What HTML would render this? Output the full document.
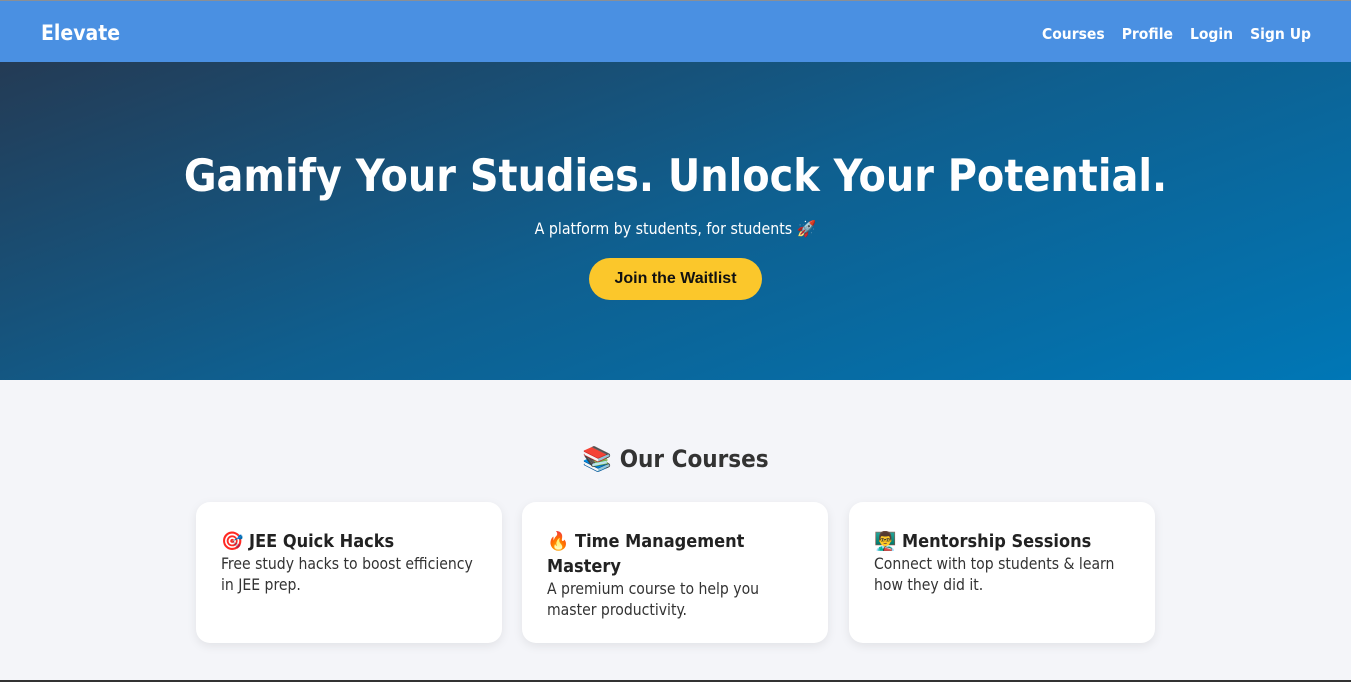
<!DOCTYPE html>
<html><head><meta charset="utf-8"><style>
*{margin:0;padding:0;box-sizing:border-box}
body{width:1351px;height:682px;overflow:hidden;background:#f4f5f9;font-family:"DejaVu Sans Condensed","Liberation Sans","Noto Sans CJK JP",sans-serif;color:#333;position:relative}
.top{position:absolute;top:0;left:0;width:1351px;height:1px;background:#8a8f96}
header{position:absolute;top:1px;left:0;width:1351px;height:61px;background:#4a90e2;color:#fff}
.logo{position:absolute;left:41px;top:20px;font-size:21px;font-weight:bold}
nav{position:absolute;right:40px;top:24px;font-size:15.5px;font-weight:bold}
nav span{margin-left:17px}
.hero{position:absolute;top:62px;left:0;width:1351px;height:318px;background:linear-gradient(160deg,#243b55 0%,#0f5f8f 50%,#0077b6 100%);color:#fff;text-align:center}
.hero h1{position:absolute;top:89px;width:100%;font-size:44.3px;font-weight:bold}
.hero p{position:absolute;top:157px;width:100%;font-size:15.8px}
.btn{position:absolute;left:589px;top:196px;width:173px;height:42px;border-radius:21px;background:#fbc72b;color:#111;font-family:"Liberation Sans",sans-serif;font-weight:bold;font-size:16px;line-height:42px}
h2{position:absolute;top:445px;width:100%;text-align:center;font-size:24px;font-weight:bold;color:#333}
.card{position:absolute;top:502px;width:306px;height:141px;background:#fff;border-radius:14px;box-shadow:0 3px 10px rgba(0,0,0,.08);padding:27px 25px}
.card h3{font-size:18px;font-weight:bold;line-height:25px;color:#222}
.card p{font-size:15.6px;line-height:21px;color:#333}
.bot{position:absolute;bottom:0;left:0;width:1351px;height:2px;background:#333}
</style></head><body>
<div class="top"></div>
<header><div class="logo">Elevate</div><nav><span>Courses</span><span>Profile</span><span>Login</span><span>Sign Up</span></nav></header>
<div class="hero"><h1>Gamify Your Studies. Unlock Your Potential.</h1><p>A platform by students, for students 🚀</p><div class="btn">Join the Waitlist</div></div>
<h2>📚 Our Courses</h2>
<div class="card" style="left:196px"><h3>🎯 JEE Quick Hacks</h3><p>Free study hacks to boost efficiency in JEE prep.</p></div>
<div class="card" style="left:522px"><h3>🔥 Time Management Mastery</h3><p>A premium course to help you<br>master productivity.</p></div>
<div class="card" style="left:849px"><h3>👨‍🏫 Mentorship Sessions</h3><p>Connect with top students &amp; learn how they did it.</p></div>
<div class="bot"></div>
</body></html>
